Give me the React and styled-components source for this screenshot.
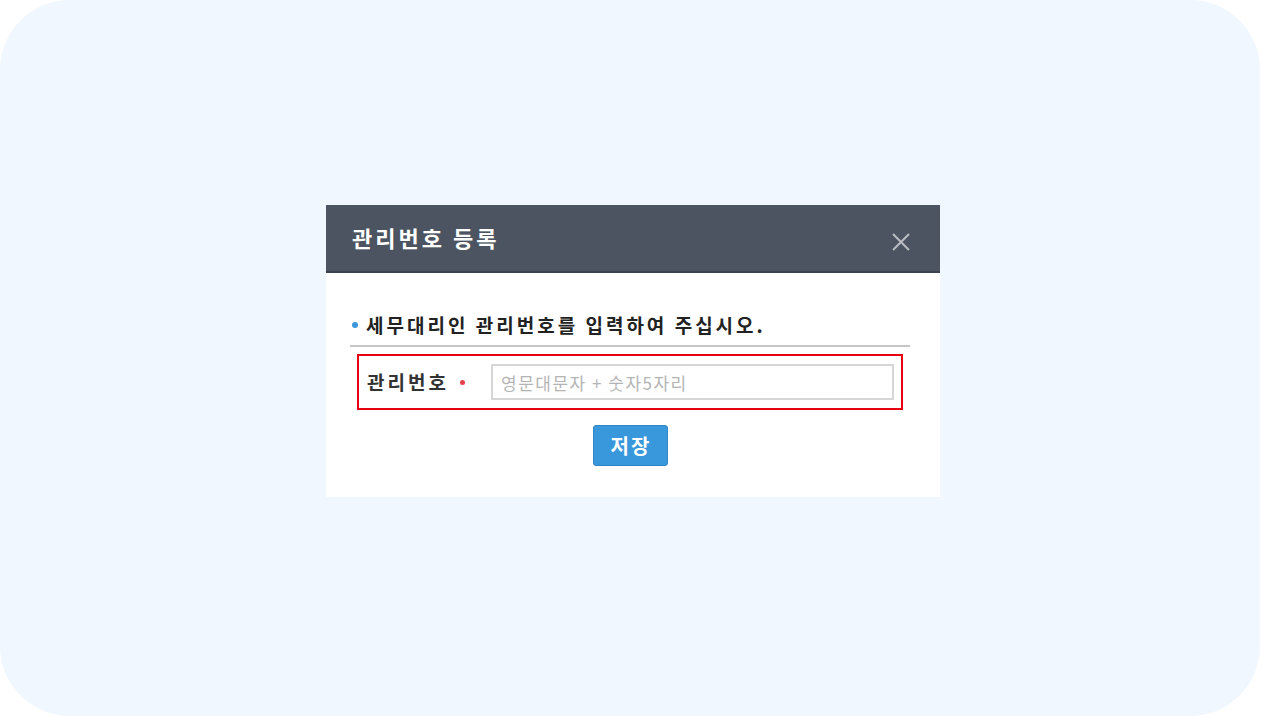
import React from "react";
import styled, { createGlobalStyle } from "styled-components";

const GlobalStyle = createGlobalStyle`
  html, body {
    margin: 0;
    padding: 0;
    background: #ffffff;
  }
  body {
    font-family: "Noto Sans CJK KR", "Noto Sans", sans-serif;
  }
`;

const Panel = styled.div`
  width: 1260px;
  height: 716px;
  background: #f0f7fe;
  border-radius: 70px;
  display: flex;
  justify-content: center;
  align-items: center;
  padding: 0 0 14px 6px;
  box-sizing: border-box;
`;

const Dialog = styled.div`
  width: 614px;
  background: #ffffff;
`;

const Header = styled.div`
  height: 66px;
  background: #4b5460;
  border-bottom: 2px solid #3b424c;
  display: flex;
  align-items: center;
  justify-content: space-between;
  padding: 0 28px 0 26px;
`;

const Title = styled.h2`
  margin: 0 0 2px;
  font-size: 22px;
  line-height: 28px;
  font-weight: 700;
  color: #ffffff;
  letter-spacing: 3px;
`;

const CloseButton = styled.button`
  border: 0;
  background: none;
  padding: 0;
  width: 22px;
  height: 22px;
  margin-top: 8px;
  cursor: pointer;
  display: flex;
  align-items: center;
  justify-content: center;
`;

const Body = styled.div`
  padding: 40px 30px 31px 24px;
`;

const Guide = styled.p`
  margin: 0;
  height: 24px;
  padding: 0 0 8px 2px;
  display: flex;
  align-items: center;
  gap: 8px;
  font-size: 19px;
  line-height: 24px;
  font-weight: 700;
  color: #222222;
  letter-spacing: 3px;
  border-bottom: 2px solid #c6c6c6;
`;

const Dot = styled.span`
  width: ${(p) => p.size}px;
  height: ${(p) => p.size}px;
  border-radius: 50%;
  background: ${(p) => p.color};
  flex: none;
`;

const FieldRow = styled.div`
  margin: 7px 7px 0;
  border: 2px solid #e60012;
  height: 56px;
  box-sizing: border-box;
  display: flex;
  align-items: center;
  padding: 0 7px 0 8px;
`;

const Label = styled.label`
  width: 124px;
  flex: none;
  display: flex;
  align-items: center;
  gap: 11px;
  font-size: 19px;
  line-height: 24px;
  font-weight: 700;
  color: #333333;
  letter-spacing: 3px;
`;

const Input = styled.input`
  flex: 1;
  height: 36px;
  box-sizing: border-box;
  border: 2px solid #d6d6d6;
  padding: 0 8px;
  font-family: inherit;
  font-size: 17px;
  letter-spacing: 1.5px;
  color: #333;
  outline: none;
  &::placeholder {
    color: #b4b4b4;
  }
`;

const Actions = styled.div`
  display: flex;
  justify-content: center;
  margin-top: 15px;
`;

const SaveButton = styled.button`
  width: 75px;
  height: 41px;
  background: #3997db;
  border: 1px solid #2f85c5;
  border-radius: 3px;
  color: #ffffff;
  font-family: inherit;
  font-size: 20px;
  font-weight: 700;
  letter-spacing: 2px;
  padding: 0 0 0 2px;
  cursor: pointer;
`;

export default function App() {
  return (
    <>
      <GlobalStyle />
      <Panel>
        <Dialog>
          <Header>
            <Title>관리번호 등록</Title>
            <CloseButton aria-label="닫기">
              <svg width="20" height="20" viewBox="0 0 20 20">
                <path d="M2 2 L18 18 M18 2 L2 18" stroke="#b9bdc3" strokeWidth="2" fill="none" />
              </svg>
            </CloseButton>
          </Header>
          <Body>
            <Guide>
              <Dot size={6} color="#3a97dc" />
              세무대리인 관리번호를 입력하여 주십시오.
            </Guide>
            <FieldRow>
              <Label htmlFor="mgmtNo">
                관리번호
                <Dot size={5} color="#e8414b" />
              </Label>
              <Input id="mgmtNo" placeholder="영문대문자 + 숫자5자리" />
            </FieldRow>
            <Actions>
              <SaveButton>저장</SaveButton>
            </Actions>
          </Body>
        </Dialog>
      </Panel>
    </>
  );
}
